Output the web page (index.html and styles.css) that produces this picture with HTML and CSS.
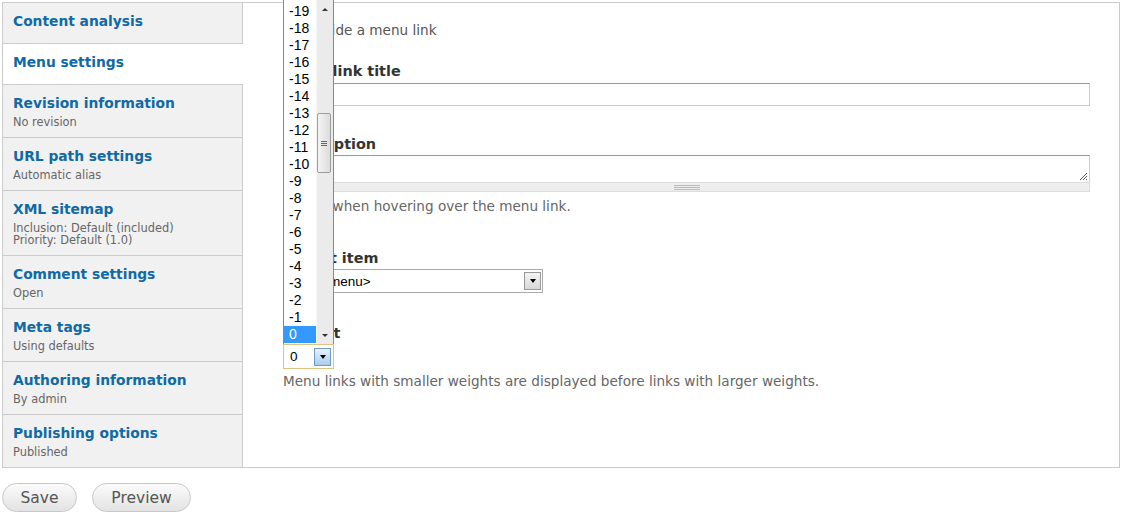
FILE: index.html
```html
<!DOCTYPE html>
<html>
<head>
<meta charset="utf-8">
<link rel="stylesheet" href="styles.css">
</head>
<body>
<div class="page">
  <div class="vtabs">
    <ul class="tab-list">
      <li class="tab tab--plain"><a class="tab-title">Content analysis</a></li>
      <li class="tab tab--plain tab--active"><a class="tab-title">Menu settings</a></li>
      <li class="tab"><a class="tab-title">Revision information</a><span class="tab-summary">No revision</span></li>
      <li class="tab"><a class="tab-title">URL path settings</a><span class="tab-summary">Automatic alias</span></li>
      <li class="tab"><a class="tab-title">XML sitemap</a><span class="tab-summary">Inclusion: Default (included)<br>Priority: Default (1.0)</span></li>
      <li class="tab"><a class="tab-title">Comment settings</a><span class="tab-summary">Open</span></li>
      <li class="tab"><a class="tab-title">Meta tags</a><span class="tab-summary">Using defaults</span></li>
      <li class="tab"><a class="tab-title">Authoring information</a><span class="tab-summary">By admin</span></li>
      <li class="tab tab--last"><a class="tab-title">Publishing options</a><span class="tab-summary">Published</span></li>
    </ul>
    <div class="pane">
      <div class="check-row">
        <span class="checkbox"></span>
        <span class="check-label">Provide a menu link</span>
      </div>

      <label class="field-label field-label--first">Menu link title</label>
      <div class="text-input"></div>

      <label class="field-label field-label--desc">Description</label>
      <div class="textarea">
        <svg class="resize" width="9" height="9" viewBox="0 0 9 9"><path d="M8 1 L1 8 M8 4 L4 8 M8 7 L7 8" stroke="#555" stroke-width="1" fill="none"/></svg>
      </div>
      <div class="grippie"><span class="grip"></span></div>
      <div class="description description--short">Shown when hovering over the menu link.</div>

      <label class="field-label field-label--parent">Parent item</label>
      <div class="select select--parent">
        <span class="select-text">&lt;Main menu&gt;</span>
        <span class="select-btn"><span class="tri"></span></span>
      </div>

      <label class="field-label field-label--weight">Weight</label>
      <div class="weight-wrap">
        <div class="select select--weight">
          <span class="select-text">0</span>
          <span class="select-btn select-btn--focus"><span class="tri"></span></span>
        </div>
        <div class="dropdown">
          <ul class="options">
            <li>-19</li><li>-18</li><li>-17</li><li>-16</li><li>-15</li>
            <li>-14</li><li>-13</li><li>-12</li><li>-11</li><li>-10</li>
            <li>-9</li><li>-8</li><li>-7</li><li>-6</li><li>-5</li>
            <li>-4</li><li>-3</li><li>-2</li><li>-1</li><li class="opt-selected">0</li>
          </ul>
          <div class="scrollbar">
            <span class="sb-up"></span>
            <span class="sb-thumb"><span class="sb-grip"></span></span>
            <span class="sb-down"></span>
          </div>
        </div>
      </div>
      <div class="description description--weight">Menu links with smaller weights are displayed before links with larger weights.</div>
    </div>
  </div>
  <div class="actions">
    <button class="btn btn--save">Save</button>
    <button class="btn btn--preview">Preview</button>
  </div>
</div>
</body>
</html>
```

FILE: styles.css
```css
html, body {
  margin: 0;
  padding: 0;
  background: #fff;
}
body {
  font-family: "DejaVu Sans", Verdana, sans-serif;
  color: #333;
}
.page {
  padding: 2px 0 0 2px;
  width: 1118px;
}
.vtabs {
  display: flex;
  border: 1px solid #ccc;
  height: 464px;
  background: #fff;
}
.tab-list {
  list-style: none;
  margin: 0;
  padding: 0;
  width: 239px;
  flex: none;
  background: #f1f1f1;
  border-right: 1px solid #ccc;
  display: flex;
  flex-direction: column;
}
.tab {
  padding: 9px 10px 9px 10px;
  border-bottom: 1px solid #ccc;
  display: flex;
  flex-direction: column;
  position: relative;
}
.tab--plain {
  padding-bottom: 13px;
}
.tab--last {
  border-bottom: none;
}
.tab--active {
  background: #fff;
  margin-right: -1px;
}
.tab-title {
  font-weight: bold;
  font-size: 13.8px;
  line-height: 18px;
  color: #0f6aa5;
  white-space: nowrap;
}
.tab-summary {
  margin-top: 4px;
  font-size: 11.4px;
  line-height: 12px;
  color: #666;
  white-space: nowrap;
}
.pane {
  flex: 1;
  padding: 18px 29px 0 40px;
  font-size: 13.6px;
}
.check-row {
  display: flex;
  align-items: center;
  height: 18px;
  gap: 6px;
}
.checkbox {
  width: 13px;
  height: 13px;
  border: 1px solid #888;
  box-sizing: border-box;
  background: #fafafa;
}
.check-label {
  color: #555;
  line-height: 18px;
}
.field-label {
  display: block;
  font-weight: bold;
  font-size: 14.4px;
  line-height: 18px;
  color: #333;
}
.field-label--first { margin-top: 23px; margin-bottom: 3px; }
.field-label--desc { margin-top: 29px; margin-bottom: 2px; }
.field-label--parent { margin-top: 35px; margin-bottom: 2px; }
.field-label--weight { margin-top: 31px; margin-bottom: 2px; }
.text-input {
  height: 23px;
  box-sizing: border-box;
  border: 1px solid #ccc;
  border-top-color: #999;
  background: #fff;
}
.textarea {
  height: 27px;
  box-sizing: border-box;
  border: 1px solid #ccc;
  border-top-color: #999;
  border-bottom: none;
  background: #fff;
  position: relative;
}
.resize {
  position: absolute;
  right: 1px;
  bottom: 1px;
}
.grippie {
  height: 10px;
  box-sizing: border-box;
  background: #eee;
  border: 1px solid #ddd;
  display: flex;
  justify-content: center;
  align-items: center;
}
.grip {
  width: 26px;
  height: 5px;
  border-top: 1px solid #bbb;
  border-bottom: 1px solid #bbb;
  box-sizing: border-box;
  background: linear-gradient(#bbb, #bbb) center / 100% 1px no-repeat;
}
.description {
  color: #666;
  line-height: 16px;
}
.description--short { margin-top: 6px; }
.description--weight { margin-top: 4px; }
.select {
  box-sizing: border-box;
  display: flex;
  align-items: center;
  justify-content: space-between;
  background: #fff;
  font-family: "Liberation Sans", Arial, sans-serif;
  font-size: 13.5px;
  color: #000;
}
.select--parent {
  width: 260px;
  height: 24px;
  border: 1px solid #aaa;
  padding: 0 1px 0 4px;
}
.select--weight {
  width: 51px;
  height: 25px;
  border: 1px solid #e0c37f;
  padding: 0 2px 0 6px;
}
.select-btn {
  width: 17px;
  height: 18px;
  box-sizing: border-box;
  border: 1px solid #999;
  background: linear-gradient(#f4f4f4, #d8d8d8);
  display: flex;
  align-items: center;
  justify-content: center;
}
.select-btn--focus {
  border-color: #6f9bc4;
  background: linear-gradient(#e6f2fc, #a9cdef);
}
.tri {
  width: 0;
  height: 0;
  border-left: 3.5px solid transparent;
  border-right: 3.5px solid transparent;
  border-top: 4px solid #000;
}
.weight-wrap {
  position: relative;
  width: 51px;
}
.dropdown {
  position: absolute;
  left: 0;
  bottom: 100%;
  width: 51px;
  height: 344px;
  box-sizing: border-box;
  border: 1px solid #888;
  border-top: none;
  border-bottom: none;
  background: #fff;
  display: flex;
  z-index: 5;
}
.options {
  list-style: none;
  margin: 0;
  padding: 3px 0 0 0;
  flex: 1;
  font-family: "Liberation Sans", Arial, sans-serif;
  font-size: 14px;
  color: #000;
}
.options li {
  height: 17px;
  line-height: 17px;
  padding-left: 5px;
}
.options li.opt-selected {
  background: #3399ff;
  color: #fff;
}
.scrollbar {
  width: 16px;
  flex: none;
  background: #ebebeb;
  border-left: 1px solid #f6f6f6;
  position: relative;
}
.sb-up, .sb-down {
  position: absolute;
  left: 5px;
  width: 0;
  height: 0;
  border-left: 3px solid transparent;
  border-right: 3px solid transparent;
}
.sb-up {
  top: 8px;
  border-bottom: 3px solid #333;
}
.sb-down {
  bottom: 7px;
  border-top: 3px solid #333;
}
.sb-thumb {
  position: absolute;
  left: 0;
  top: 113px;
  width: 14px;
  height: 60px;
  box-sizing: border-box;
  border: 1px solid #9c9c9c;
  border-radius: 2px;
  background: linear-gradient(90deg, #f4f4f4, #dcdcdc);
  display: flex;
  align-items: center;
  justify-content: center;
}
.sb-grip {
  width: 6px;
  height: 5px;
  border-top: 1px solid #666;
  border-bottom: 1px solid #666;
  box-sizing: border-box;
  background: linear-gradient(#666, #666) center / 100% 1px no-repeat;
}
.actions {
  display: flex;
  gap: 15px;
  margin-top: 15px;
}
.btn {
  height: 29px;
  box-sizing: border-box;
  border: 1px solid #c8c8c8;
  border-radius: 15px;
  background: linear-gradient(#fbfbfb, #e3e3e3);
  font-family: "DejaVu Sans", Verdana, sans-serif;
  font-size: 15.5px;
  color: #555;
  padding: 0;
}
.btn--save { width: 75px; }
.btn--preview { width: 99px; }
```
